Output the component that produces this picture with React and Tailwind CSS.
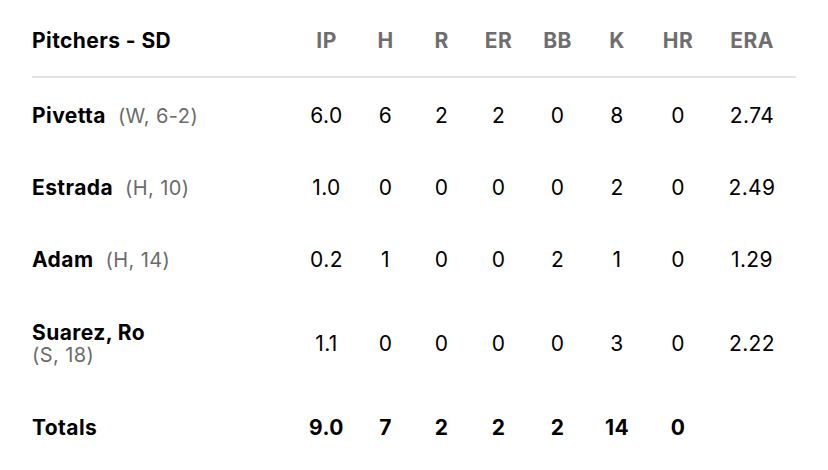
const cols = ['IP', 'H', 'R', 'ER', 'BB', 'K', 'HR', 'ERA'];

const pitchers = [
  { name: 'Pivetta', note: '(W, 6-2)', stats: ['6.0', '6', '2', '2', '0', '8', '0', '2.74'] },
  { name: 'Estrada', note: '(H, 10)', stats: ['1.0', '0', '0', '0', '0', '2', '0', '2.49'] },
  { name: 'Adam', note: '(H, 14)', stats: ['0.2', '1', '0', '0', '2', '1', '0', '1.29'] },
  { name: 'Suarez, Ro', note: '(S, 18)', stats: ['1.1', '0', '0', '0', '0', '3', '0', '2.22'], stacked: true },
];

const totals = ['9.0', '7', '2', '2', '2', '14', '0', ''];

const grid = 'grid grid-cols-[264px_61px_57px_55px_59px_59px_60px_62px_86px] items-center';

const App = () => {
  return (
    <div className="w-[828px] h-[470px] bg-white px-8 text-black font-['Inter','Liberation_Sans',sans-serif] text-[21px] tracking-[0.02em]">
      {/* Header */}
      <div className={`${grid} h-[78px] border-b-2 border-[#e2e2e2] pt-[6px]`}>
        <div className="font-bold">Pitchers - SD</div>
        {cols.map((c) => (
          <div key={c} className="text-center font-bold text-[#6e6e6e]">
            {c}
          </div>
        ))}
      </div>

      {/* Rows */}
      {pitchers.map((p) => (
        <div key={p.name} className={`${grid} pt-[4px] ${p.stacked ? 'h-[96px]' : 'h-[72px]'}`}>
          {p.stacked ? (
            <div className="flex flex-col leading-[22px]">
              <span className="font-bold">{p.name}</span>
              <span className="text-[#6b6b6b] text-[20px]">{p.note}</span>
            </div>
          ) : (
            <div className="flex items-baseline gap-3">
              <span className="font-bold">{p.name}</span>
              <span className="text-[#6b6b6b] text-[20px]">{p.note}</span>
            </div>
          )}
          {p.stats.map((s, i) => (
            <div key={i} className="text-center">
              {s}
            </div>
          ))}
        </div>
      ))}

      {/* Totals */}
      <div className={`${grid} h-[72px] pt-[4px]`}>
        <div className="font-bold">Totals</div>
        {totals.map((s, i) => (
          <div key={i} className="text-center font-bold">
            {s}
          </div>
        ))}
      </div>
    </div>
  );
};

export default App;
